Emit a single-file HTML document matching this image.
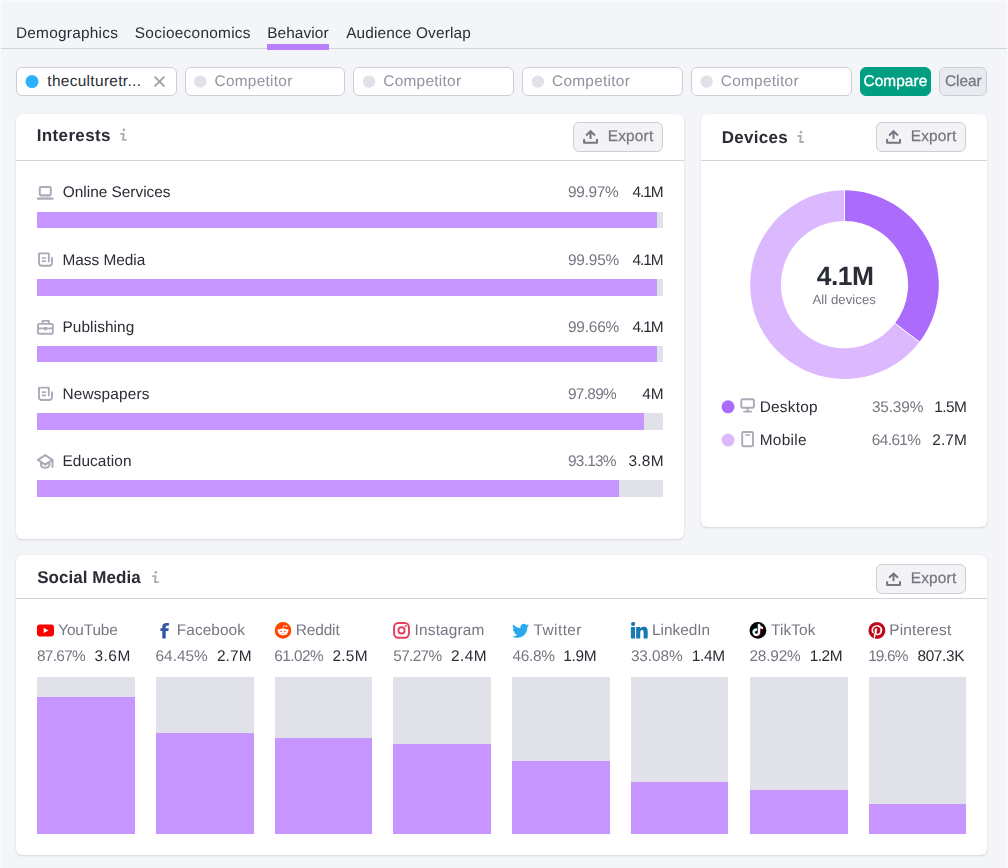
<!DOCTYPE html>
<html lang="en">
<head>
<meta charset="utf-8">
<title>Audience Behavior</title>
<meta name="viewport" content="width=1008">
<style>
*{box-sizing:border-box;margin:0;padding:0}
html,body{width:1008px;height:868px;overflow:hidden;background:#f4f5f9}
body{position:relative;font-family:"Liberation Sans",Arial,sans-serif;font-size:15.4px;line-height:20px;color:#2b2d36;
 box-shadow:inset 1px 1px 0 #f9fafc,inset -1px 0 0 #fbfbfc}
nav,form,section{position:absolute;left:0;top:0;width:1008px;height:868px}
nav,section{will-change:transform}
div,svg.i,.t{position:absolute}
.t{white-space:nowrap;text-rendering:geometricPrecision;line-height:20px;font-weight:400;text-decoration:none;font-kerning:normal}
h2.t{font-weight:700}
.card{background:#fff;border-radius:6px;box-shadow:0 0 1px rgba(25,27,35,.16),0 1px 2px rgba(25,27,35,.12)}
.inp{background:#fff;border:1px solid #cbced6;border-radius:6px}
.btn{background:rgba(138,142,155,.1);border:1px solid #cbced6;border-radius:6px}
.btn.primary{background:#009f81;border-color:#009f81}
.g{left:0;top:0;width:0;height:0}
.bar,.col{background:#e0e1e9}
.bar i{position:absolute;left:0;top:0;bottom:0;background:#c695ff}
.col i{position:absolute;left:0;right:0;bottom:0;background:#c695ff}
</style>
</head>
<body>
<nav>
<a class="t" style="left:15.98px;top:24px;font-size:15.4px;letter-spacing:0.24px;color:#2b2d36;">Demographics</a>
<a class="t" style="left:134.83px;top:24px;font-size:15.4px;letter-spacing:0.28px;color:#2b2d36;">Socioeconomics</a>
<a class="t" style="left:267.18px;top:24px;font-size:15.4px;letter-spacing:0.09px;color:#2b2d36;">Behavior</a>
<a class="t" style="left:346.20px;top:24px;font-size:15.4px;letter-spacing:0.15px;color:#2b2d36;">Audience Overlap</a>
<div style="left:1px;top:48px;width:1006px;height:1px;background:#d1d4db"></div>
<div style="left:267px;top:44px;width:62px;height:6px;background:#b880ff"></div>
</nav>
<form>
<div class="g field">
<div class="inp" style="left:16px;top:67px;width:161px;height:29px;"></div>
<svg class="i" style="left:24px;top:74px" width="18" height="18"><circle cx="8.00" cy="7.60" r="6.5" fill="#2bb3ff"/></svg>
<span class="t" style="left:47.27px;top:72px;font-size:15.4px;letter-spacing:0.34px;color:#2b2d36;">theculturetr...</span>
<svg class="i" style="left:152px;top:74px" width="16" height="16"><g transform="translate(0.500 0.500)"><path d="M2.6 2.6 L11.4 11.4 M11.4 2.6 L2.6 11.4" stroke="#9fa2ae" stroke-width="1.9" stroke-linecap="round"/></g></svg>
</div>
<div class="g field">
<div class="inp" style="left:185px;top:67px;width:160px;height:29px;"></div>
<svg class="i" style="left:193px;top:74px" width="18" height="18"><circle cx="7.35" cy="7.60" r="6.2" fill="#e0e1e9"/></svg>
<span class="t" style="left:214.50px;top:72px;font-size:15.4px;letter-spacing:0.28px;color:#9093a0;">Competitor</span>
</div>
<div class="g field">
<div class="inp" style="left:353px;top:67px;width:161px;height:29px;"></div>
<svg class="i" style="left:361px;top:74px" width="18" height="18"><circle cx="8.10" cy="7.60" r="6.2" fill="#e0e1e9"/></svg>
<span class="t" style="left:383.25px;top:72px;font-size:15.4px;letter-spacing:0.28px;color:#9093a0;">Competitor</span>
</div>
<div class="g field">
<div class="inp" style="left:522px;top:67px;width:161px;height:29px;"></div>
<svg class="i" style="left:530px;top:74px" width="18" height="18"><circle cx="7.85" cy="7.60" r="6.2" fill="#e0e1e9"/></svg>
<span class="t" style="left:552.00px;top:72px;font-size:15.4px;letter-spacing:0.28px;color:#9093a0;">Competitor</span>
</div>
<div class="g field">
<div class="inp" style="left:691px;top:67px;width:161px;height:29px;"></div>
<svg class="i" style="left:699px;top:74px" width="18" height="18"><circle cx="7.60" cy="7.60" r="6.2" fill="#e0e1e9"/></svg>
<span class="t" style="left:720.75px;top:72px;font-size:15.4px;letter-spacing:0.28px;color:#9093a0;">Competitor</span>
</div>
<div class="g"><div class="btn primary" style="left:860px;top:67px;width:71px;height:29px;"></div><span class="t" style="left:863.44px;top:72px;font-size:15.4px;letter-spacing:0.08px;color:#fff;-webkit-text-stroke:0.35px #fff;">Compare</span></div>
<div class="g"><div class="btn" style="left:939px;top:67px;width:48px;height:29px;"></div><span class="t" style="left:944.91px;top:72px;font-size:15.4px;letter-spacing:-0.00px;color:#757782;-webkit-text-stroke:0.25px #757782;">Clear</span></div>
</form>
<section>
<div class="card" style="left:16px;top:114px;width:668px;height:425px;"></div>
<h2 class="t" style="left:36.74px;top:126px;font-size:17px;letter-spacing:0.36px;color:#2b2d36;font-weight:700;">Interests</h2>
<svg class="i" style="left:118px;top:127px" width="12" height="18"><g transform="translate(0.400 0.400)"><circle cx="5.4" cy="2.5" r="1.3" fill="#a9abb6"/><path d="M2.6 6.4 H5.3 L4.5 12.4 H7.6" fill="none" stroke="#a9abb6" stroke-width="1.8" stroke-linejoin="round" stroke-linecap="round"/></g></svg>
<div class="g"><div class="btn" style="left:573px;top:122px;width:90px;height:30px;"></div><svg class="i" style="left:582px;top:129px" width="18" height="18"><g transform="translate(0.800 0.200)"><path d="M7.75 2 V9.8 M3.3 6.3 L7.75 2.05 L12.2 6.3" fill="none" stroke="#757782" stroke-width="2" stroke-linejoin="miter"/><path d="M1.3 9.8 V13.6 H14.2 V9.8" fill="none" stroke="#757782" stroke-width="2" stroke-linejoin="round"/></g></svg><span class="t" style="left:607.72px;top:127px;font-size:15.4px;letter-spacing:0.20px;color:#757782;-webkit-text-stroke:0.25px #757782;">Export</span></div>
<div style="left:16px;top:160px;width:668px;height:1px;background:#d1d4db"></div>
<div class="g row">
<svg class="i" style="left:36px;top:185px" width="20" height="18"><g transform="translate(0.800 0.100)"><rect x="3" y="1.8" width="11" height="8.4" rx="1.2" fill="none" stroke="#a9abb6" stroke-width="2"/><rect x="0.2" y="12.3" width="16.6" height="2.3" rx="0.6" fill="#a9abb6"/><rect x="3" y="11" width="11" height="1.4" fill="#a9abb6" opacity=".4"/></g></svg>
<span class="t" style="left:62.79px;top:183px;font-size:15.4px;letter-spacing:-0.00px;color:#2b2d36;">Online Services</span>
<span class="t" style="left:568.00px;top:183px;font-size:15.4px;letter-spacing:-0.32px;color:#757782;">99.97%</span>
<span class="t" style="left:632.45px;top:183px;font-size:15.4px;letter-spacing:-1.06px;color:#2b2d36;">4.1M</span>
<div class="bar" style="left:37px;top:212px;width:626px;height:16px;"><i style="width:620px"></i></div>
</div>
<div class="g row">
<svg class="i" style="left:36px;top:251px" width="20" height="20"><g transform="translate(0.800 0.200)"><path d="M12 10.2 V2.6 a0.4 0.4 0 0 0 -0.4 -0.4 H2.6 a0.4 0.4 0 0 0 -0.4 0.4 V12 a2.6 2.6 0 0 0 2.6 2.6 H12.6 a2.6 2.6 0 0 0 2.6 -2.6 V6.8" fill="none" stroke="#a9abb6" stroke-width="1.9" stroke-linecap="round" stroke-linejoin="round"/><path d="M5.7 6.8 H8.5 M5.7 10 H8.5" fill="none" stroke="#a9abb6" stroke-width="1.7" stroke-linecap="round"/></g></svg>
<span class="t" style="left:62.48px;top:251px;font-size:15.4px;letter-spacing:-0.02px;color:#2b2d36;">Mass Media</span>
<span class="t" style="left:568.00px;top:251px;font-size:15.4px;letter-spacing:-0.20px;color:#757782;">99.95%</span>
<span class="t" style="left:632.45px;top:251px;font-size:15.4px;letter-spacing:-1.06px;color:#2b2d36;">4.1M</span>
<div class="bar" style="left:37px;top:279px;width:626px;height:17px;"><i style="width:620px"></i></div>
</div>
<div class="g row">
<svg class="i" style="left:36px;top:318px" width="20" height="20"><g transform="translate(0.900 0.900)"><rect x="1.1" y="5" width="14.8" height="9.8" rx="1" fill="none" stroke="#a9abb6" stroke-width="1.85"/><path d="M5.6 4.6 V2 H12 V4.6" fill="none" stroke="#a9abb6" stroke-width="1.85" stroke-linejoin="round"/><path d="M1.5 9.5 H15.6" stroke="#a9abb6" stroke-width="1.7"/><circle cx="8.6" cy="9.7" r="1.9" fill="#a9abb6"/></g></svg>
<span class="t" style="left:62.48px;top:318px;font-size:15.4px;letter-spacing:0.09px;color:#2b2d36;">Publishing</span>
<span class="t" style="left:568.00px;top:318px;font-size:15.4px;letter-spacing:-0.20px;color:#757782;">99.66%</span>
<span class="t" style="left:632.45px;top:318px;font-size:15.4px;letter-spacing:-1.06px;color:#2b2d36;">4.1M</span>
<div class="bar" style="left:37px;top:346px;width:626px;height:16px;"><i style="width:620px"></i></div>
</div>
<div class="g row">
<svg class="i" style="left:36px;top:385px" width="20" height="20"><g transform="translate(0.800 0.400)"><path d="M12 10.2 V2.6 a0.4 0.4 0 0 0 -0.4 -0.4 H2.6 a0.4 0.4 0 0 0 -0.4 0.4 V12 a2.6 2.6 0 0 0 2.6 2.6 H12.6 a2.6 2.6 0 0 0 2.6 -2.6 V6.8" fill="none" stroke="#a9abb6" stroke-width="1.9" stroke-linecap="round" stroke-linejoin="round"/><path d="M5.7 6.8 H8.5 M5.7 10 H8.5" fill="none" stroke="#a9abb6" stroke-width="1.7" stroke-linecap="round"/></g></svg>
<span class="t" style="left:62.48px;top:385px;font-size:15.4px;letter-spacing:0.15px;color:#2b2d36;">Newspapers</span>
<span class="t" style="left:568.00px;top:385px;font-size:15.4px;letter-spacing:-0.70px;color:#757782;">97.89%</span>
<span class="t" style="left:642.25px;top:385px;font-size:15.4px;letter-spacing:0.01px;color:#2b2d36;">4M</span>
<div class="bar" style="left:37px;top:413px;width:626px;height:17px;"><i style="width:607px"></i></div>
</div>
<div class="g row">
<svg class="i" style="left:36px;top:453px" width="20" height="20"><g transform="translate(0.600 0.100)"><path d="M1.4 6.8 L8.6 2 L15.8 6.8 L8.6 11.6 Z" fill="none" stroke="#a9abb6" stroke-width="2" stroke-linejoin="round"/><path d="M4.4 9.4 V12.4 C5.4 15.4 11.8 15.4 12.8 12.4 V9.4" fill="none" stroke="#a9abb6" stroke-width="2" stroke-linejoin="round"/><path d="M15.9 7 V14" fill="none" stroke="#a9abb6" stroke-width="2" stroke-linecap="round"/></g></svg>
<span class="t" style="left:62.48px;top:452px;font-size:15.4px;letter-spacing:0.07px;color:#2b2d36;">Education</span>
<span class="t" style="left:568.00px;top:452px;font-size:15.4px;letter-spacing:-0.74px;color:#757782;">93.13%</span>
<span class="t" style="left:628.49px;top:452px;font-size:15.4px;letter-spacing:0.25px;color:#2b2d36;">3.8M</span>
<div class="bar" style="left:37px;top:480px;width:626px;height:17px;"><i style="width:582px"></i></div>
</div>
</section>
<section>
<div class="card" style="left:701px;top:114px;width:286px;height:412.6px;"></div>
<h2 class="t" style="left:721.74px;top:128px;font-size:17px;letter-spacing:0.27px;color:#2b2d36;font-weight:700;">Devices</h2>
<svg class="i" style="left:795px;top:129px" width="12" height="18"><g transform="translate(0.600 0.600)"><circle cx="5.4" cy="2.5" r="1.3" fill="#a9abb6"/><path d="M2.6 6.4 H5.3 L4.5 12.4 H7.6" fill="none" stroke="#a9abb6" stroke-width="1.8" stroke-linejoin="round" stroke-linecap="round"/></g></svg>
<div class="g"><div class="btn" style="left:876px;top:122px;width:90px;height:30px;"></div><svg class="i" style="left:885px;top:129px" width="18" height="18"><g transform="translate(0.800 0.200)"><path d="M7.75 2 V9.8 M3.3 6.3 L7.75 2.05 L12.2 6.3" fill="none" stroke="#757782" stroke-width="2" stroke-linejoin="miter"/><path d="M1.3 9.8 V13.6 H14.2 V9.8" fill="none" stroke="#757782" stroke-width="2" stroke-linejoin="round"/></g></svg><span class="t" style="left:910.72px;top:127px;font-size:15.4px;letter-spacing:0.20px;color:#757782;-webkit-text-stroke:0.25px #757782;">Export</span></div>
<div style="left:701px;top:160px;width:286px;height:1px;background:#d1d4db"></div>
<svg class="i" style="left:0;top:0" width="1008" height="868" viewBox="0 0 1008 868"><path d="M844.50 190.35 A94.3 94.3 0 0 1 919.41 341.93 L895.02 323.28 A63.6 63.6 0 0 0 844.50 221.05 Z" fill="#ab6cfe"/><path d="M919.41 341.93 A94.3 94.3 0 1 1 844.50 190.35 L844.50 221.05 A63.6 63.6 0 1 0 895.02 323.28 Z" fill="#dcb8ff"/><path d="M844.50 222.05 L844.50 189.35" stroke="#fff" stroke-width="1"/><path d="M894.23 322.68 L920.20 342.54" stroke="#fff" stroke-width="1"/></svg>
<span class="t" style="left:816.78px;top:266px;font-size:26.4px;letter-spacing:-0.52px;color:#2b2d36;font-weight:700;">4.1M</span>
<span class="t" style="left:812.40px;top:290px;font-size:13.2px;letter-spacing:0.05px;color:#757782;">All devices</span>
<div class="g legend">
<svg class="i" style="left:720px;top:399px" width="18" height="18"><circle cx="8.05" cy="7.80" r="6.5" fill="#ab6cfe"/></svg>
<svg class="i" style="left:740px;top:398px" width="18" height="17"><g transform="translate(0.100 0.000)"><rect x="1.2" y="1.2" width="12.6" height="8.6" rx="1.2" fill="none" stroke="#a9abb6" stroke-width="1.9"/><path d="M7.5 10 V13.2" stroke="#a9abb6" stroke-width="2"/><path d="M4 13.6 H11" stroke="#a9abb6" stroke-width="1.9" stroke-linecap="round"/></g></svg>
<span class="t" style="left:759.78px;top:398px;font-size:15.4px;letter-spacing:0.21px;color:#2b2d36;">Desktop</span>
<span class="t" style="left:871.89px;top:398px;font-size:15.4px;letter-spacing:-0.14px;color:#757782;">35.39%</span>
<span class="t" style="left:934.13px;top:398px;font-size:15.4px;letter-spacing:-0.53px;color:#2b2d36;">1.5M</span>
</div>
<div class="g legend">
<svg class="i" style="left:720px;top:432px" width="18" height="18"><circle cx="8.05" cy="8.10" r="6.5" fill="#dcb8ff"/></svg>
<svg class="i" style="left:741px;top:430px" width="18" height="20"><g transform="translate(0.100 0.900)"><rect x="1.1" y="1.1" width="10.8" height="14.2" rx="1.2" fill="none" stroke="#a9abb6" stroke-width="1.9"/><path d="M4.6 4 H8.4" stroke="#a9abb6" stroke-width="1.5" stroke-linecap="round"/></g></svg>
<span class="t" style="left:759.78px;top:431px;font-size:15.4px;letter-spacing:0.27px;color:#2b2d36;">Mobile</span>
<span class="t" style="left:871.84px;top:431px;font-size:15.4px;letter-spacing:-0.61px;color:#757782;">64.61%</span>
<span class="t" style="left:932.30px;top:431px;font-size:15.4px;letter-spacing:0.09px;color:#2b2d36;">2.7M</span>
</div>
</section>
<section>
<div class="card" style="left:16px;top:555px;width:971px;height:300px;"></div>
<h2 class="t" style="left:37.13px;top:568px;font-size:17px;letter-spacing:0.06px;color:#2b2d36;font-weight:700;">Social Media</h2>
<svg class="i" style="left:150px;top:569px" width="12" height="18"><g transform="translate(0.400 0.800)"><circle cx="5.4" cy="2.5" r="1.3" fill="#a9abb6"/><path d="M2.6 6.4 H5.3 L4.5 12.4 H7.6" fill="none" stroke="#a9abb6" stroke-width="1.8" stroke-linejoin="round" stroke-linecap="round"/></g></svg>
<div class="g"><div class="btn" style="left:876px;top:564px;width:90px;height:30px;"></div><svg class="i" style="left:885px;top:571px" width="18" height="18"><g transform="translate(0.800 0.500)"><path d="M7.75 2 V9.8 M3.3 6.3 L7.75 2.05 L12.2 6.3" fill="none" stroke="#757782" stroke-width="2" stroke-linejoin="miter"/><path d="M1.3 9.8 V13.6 H14.2 V9.8" fill="none" stroke="#757782" stroke-width="2" stroke-linejoin="round"/></g></svg><span class="t" style="left:910.72px;top:569px;font-size:15.4px;letter-spacing:0.20px;color:#757782;-webkit-text-stroke:0.25px #757782;">Export</span></div>
<div style="left:16px;top:598px;width:971px;height:1px;background:#d1d4db"></div>
<div class="g network">
<svg class="i" style="left:37px;top:624px" width="18" height="14"><g transform="translate(0.000 0.400)"><rect x="0" y="0" width="17" height="12" rx="2.8" fill="#ff0000"/><path d="M6.7 3.3 L11.4 6 L6.7 8.7 Z" fill="#fff"/></g></svg>
<span class="t" style="left:58.31px;top:621px;font-size:15.4px;letter-spacing:-0.17px;color:#757782;">YouTube</span>
<span class="t" style="left:36.94px;top:647px;font-size:15.4px;letter-spacing:-0.69px;color:#757782;">87.67%</span>
<span class="t" style="left:94.39px;top:647px;font-size:15.4px;letter-spacing:0.55px;color:#2b2d36;">3.6M</span>
<div class="col" style="left:37px;top:677px;width:98px;height:157px;"><i style="height:137px"></i></div>
</div>
<div class="g network">
<svg class="i" style="left:160px;top:622px" width="11" height="19"><g transform="translate(0.000 0.500)"><path d="M2.3 16.1 V8.6 H0.4 V5.8 H2.3 V4.2 C2.3 1.6 3.9 0.4 6.4 0.4 C7.4 0.4 8.3 0.5 8.9 0.6 V3.2 H7.4 C6.2 3.2 5.7 3.7 5.7 4.7 V5.8 H8.8 L8.4 8.6 H5.7 V16.1 Z" fill="#3257a6"/></g></svg>
<span class="t" style="left:176.78px;top:621px;font-size:15.4px;letter-spacing:0.08px;color:#757782;">Facebook</span>
<span class="t" style="left:155.54px;top:647px;font-size:15.4px;letter-spacing:-0.01px;color:#757782;">64.45%</span>
<span class="t" style="left:216.90px;top:647px;font-size:15.4px;letter-spacing:0.12px;color:#2b2d36;">2.7M</span>
<div class="col" style="left:156px;top:677px;width:98px;height:157px;"><i style="height:101px"></i></div>
</div>
<div class="g network">
<svg class="i" style="left:274px;top:622px" width="19" height="18"><g transform="translate(0.700 0.100) scale(0.69167 0.69167)"><circle cx="12" cy="12" r="11.5" fill="#fff"/><path d="M12 0A12 12 0 0 0 0 12a12 12 0 0 0 12 12 12 12 0 0 0 12-12A12 12 0 0 0 12 0zm5.01 4.744c.688 0 1.25.561 1.25 1.249a1.25 1.25 0 0 1-2.498.056l-2.597-.547-.8 3.747c1.824.07 3.48.632 4.674 1.488.308-.309.73-.491 1.207-.491.968 0 1.754.786 1.754 1.754 0 .716-.435 1.333-1.01 1.614a3.111 3.111 0 0 1 .042.52c0 2.694-3.13 4.87-7.004 4.87-3.874 0-7.004-2.176-7.004-4.87 0-.183.015-.366.043-.534A1.748 1.748 0 0 1 4.028 12c0-.968.786-1.754 1.754-1.754.463 0 .898.196 1.207.49 1.207-.883 2.878-1.43 4.744-1.487l.885-4.182a.342.342 0 0 1 .14-.197.35.35 0 0 1 .238-.042l2.906.617a1.214 1.214 0 0 1 1.108-.701zM9.25 12C8.561 12 8 12.562 8 13.25c0 .687.561 1.248 1.25 1.248.687 0 1.248-.561 1.248-1.249 0-.688-.561-1.249-1.249-1.249zm5.5 0c-.687 0-1.248.561-1.248 1.25 0 .687.561 1.248 1.249 1.248.688 0 1.249-.561 1.249-1.249 0-.687-.562-1.249-1.25-1.249zm-5.466 3.99a.327.327 0 0 0-.231.094.33.33 0 0 0 0 .463c.842.842 2.484.913 2.961.913.477 0 2.105-.056 2.961-.913a.361.361 0 0 0 .029-.463.33.33 0 0 0-.464 0c-.547.533-1.684.73-2.512.73-.828 0-1.979-.196-2.512-.73a.326.326 0 0 0-.232-.095z" fill="#ff4500"/></g></svg>
<span class="t" style="left:295.68px;top:621px;font-size:15.4px;letter-spacing:-0.09px;color:#757782;">Reddit</span>
<span class="t" style="left:274.34px;top:647px;font-size:15.4px;letter-spacing:-0.57px;color:#757782;">61.02%</span>
<span class="t" style="left:332.40px;top:647px;font-size:15.4px;letter-spacing:0.29px;color:#2b2d36;">2.5M</span>
<div class="col" style="left:275px;top:677px;width:97px;height:157px;"><i style="height:96px"></i></div>
</div>
<div class="g network">
<svg class="i" style="left:393px;top:621px" width="18" height="19"><g transform="translate(0.000 0.900)"><rect x="1.1" y="1.1" width="14.8" height="14.8" rx="4.2" fill="none" stroke="#e4405f" stroke-width="2"/><circle cx="8.5" cy="8.5" r="3.1" fill="none" stroke="#e4405f" stroke-width="1.9"/><circle cx="12.8" cy="4.1" r="1.05" fill="#e4405f"/></g></svg>
<span class="t" style="left:414.57px;top:621px;font-size:15.4px;letter-spacing:0.18px;color:#757782;">Instagram</span>
<span class="t" style="left:393.28px;top:647px;font-size:15.4px;letter-spacing:-0.65px;color:#757782;">57.27%</span>
<span class="t" style="left:450.90px;top:647px;font-size:15.4px;letter-spacing:0.45px;color:#2b2d36;">2.4M</span>
<div class="col" style="left:393px;top:677px;width:98px;height:157px;"><i style="height:90px"></i></div>
</div>
<div class="g network">
<svg class="i" style="left:512px;top:623px" width="19" height="16"><g transform="translate(0.100 -0.771) scale(0.70833 0.71429)"><path d="M23.953 4.57a10 10 0 01-2.825.775 4.958 4.958 0 002.163-2.723c-.951.555-2.005.959-3.127 1.184a4.92 4.92 0 00-8.384 4.482C7.69 8.095 4.067 6.13 1.64 3.162a4.822 4.822 0 00-.666 2.475c0 1.71.87 3.213 2.188 4.096a4.904 4.904 0 01-2.228-.616v.06a4.923 4.923 0 003.946 4.827 4.996 4.996 0 01-2.212.085 4.936 4.936 0 004.604 3.417 9.867 9.867 0 01-6.102 2.105c-.39 0-.779-.023-1.17-.067a13.995 13.995 0 007.557 2.209c9.053 0 13.998-7.496 13.998-13.985 0-.21 0-.42-.015-.63A9.935 9.935 0 0024 4.59z" fill="#29a9ea"/></g></svg>
<span class="t" style="left:533.48px;top:621px;font-size:15.4px;letter-spacing:0.45px;color:#757782;">Twitter</span>
<span class="t" style="left:512.45px;top:647px;font-size:15.4px;letter-spacing:-0.31px;color:#757782;">46.8%</span>
<span class="t" style="left:563.13px;top:647px;font-size:15.4px;letter-spacing:-0.29px;color:#2b2d36;">1.9M</span>
<div class="col" style="left:512px;top:677px;width:98px;height:157px;"><i style="height:73px"></i></div>
</div>
<div class="g network">
<svg class="i" style="left:630px;top:622px" width="19" height="18"><g transform="translate(0.900 0.000)"><circle cx="2.2" cy="2" r="2.1" fill="#1878b4"/><path d="M0 5.1 H4.15 V16.6 H1.2 a1.2 1.2 0 0 1 -1.2 -1.2 Z" fill="#1878b4"/><path d="M5.25 5.1 H9.2 V6.6 C9.9 5.5 11.2 4.75 12.8 4.75 C15.8 4.75 16.8 6.7 16.8 9.6 V15.4 a1.2 1.2 0 0 1 -1.2 1.2 H12.7 V10.5 C12.7 9.1 12.4 8.1 11.1 8.1 C9.8 8.1 9.35 9.1 9.35 10.5 V16.6 H5.25 Z" fill="#1878b4"/></g></svg>
<span class="t" style="left:651.98px;top:621px;font-size:15.4px;letter-spacing:-0.00px;color:#757782;">LinkedIn</span>
<span class="t" style="left:630.89px;top:647px;font-size:15.4px;letter-spacing:-0.08px;color:#757782;">33.08%</span>
<span class="t" style="left:691.63px;top:647px;font-size:15.4px;letter-spacing:-0.29px;color:#2b2d36;">1.4M</span>
<div class="col" style="left:631px;top:677px;width:97px;height:157px;"><i style="height:52px"></i></div>
</div>
<div class="g network">
<svg class="i" style="left:749px;top:622px" width="19" height="18"><g transform="translate(0.500 0.000) scale(0.70000 0.70000)"><circle cx="12" cy="12" r="12" fill="#000"/><path transform="translate(2.9,2.6) scale(0.7)" d="M12.525.02c1.31-.02 2.61-.01 3.91-.02.08 1.53.63 3.09 1.75 4.17 1.12 1.11 2.7 1.62 4.24 1.79v4.03c-1.44-.05-2.89-.35-4.2-.97-.57-.26-1.1-.59-1.62-.93-.01 2.92.01 5.84-.02 8.75-.08 1.4-.54 2.79-1.35 3.94-1.31 1.92-3.58 3.17-5.91 3.21-1.43.08-2.86-.31-4.08-1.03-2.02-1.19-3.44-3.37-3.65-5.71-.02-.5-.03-1-.01-1.49.18-1.9 1.12-3.72 2.58-4.96 1.66-1.44 3.98-2.13 6.15-1.72.02 1.48-.04 2.96-.04 4.44-.99-.32-2.15-.23-3.02.37-.63.41-1.11 1.04-1.36 1.75-.21.51-.15 1.07-.14 1.61.24 1.64 1.82 3.02 3.5 2.87 1.12-.01 2.19-.66 2.77-1.61.19-.33.4-.67.41-1.06.1-1.79.06-3.57.07-5.36.01-4.03-.01-8.05.02-12.07z" fill="#25f4ee"/><path transform="translate(4.1,3.6) scale(0.7)" d="M12.525.02c1.31-.02 2.61-.01 3.91-.02.08 1.53.63 3.09 1.75 4.17 1.12 1.11 2.7 1.62 4.24 1.79v4.03c-1.44-.05-2.89-.35-4.2-.97-.57-.26-1.1-.59-1.62-.93-.01 2.92.01 5.84-.02 8.75-.08 1.4-.54 2.79-1.35 3.94-1.31 1.92-3.58 3.17-5.91 3.21-1.43.08-2.86-.31-4.08-1.03-2.02-1.19-3.44-3.37-3.65-5.71-.02-.5-.03-1-.01-1.49.18-1.9 1.12-3.72 2.58-4.96 1.66-1.44 3.98-2.13 6.15-1.72.02 1.48-.04 2.96-.04 4.44-.99-.32-2.15-.23-3.02.37-.63.41-1.11 1.04-1.36 1.75-.21.51-.15 1.07-.14 1.61.24 1.64 1.82 3.02 3.5 2.87 1.12-.01 2.19-.66 2.77-1.61.19-.33.4-.67.41-1.06.1-1.79.06-3.57.07-5.36.01-4.03-.01-8.05.02-12.07z" fill="#fe2c55"/><path transform="translate(3.5,3.1) scale(0.7)" d="M12.525.02c1.31-.02 2.61-.01 3.91-.02.08 1.53.63 3.09 1.75 4.17 1.12 1.11 2.7 1.62 4.24 1.79v4.03c-1.44-.05-2.89-.35-4.2-.97-.57-.26-1.1-.59-1.62-.93-.01 2.92.01 5.84-.02 8.75-.08 1.4-.54 2.79-1.35 3.94-1.31 1.92-3.58 3.17-5.91 3.21-1.43.08-2.86-.31-4.08-1.03-2.02-1.19-3.44-3.37-3.65-5.71-.02-.5-.03-1-.01-1.49.18-1.9 1.12-3.72 2.58-4.96 1.66-1.44 3.98-2.13 6.15-1.72.02 1.48-.04 2.96-.04 4.44-.99-.32-2.15-.23-3.02.37-.63.41-1.11 1.04-1.36 1.75-.21.51-.15 1.07-.14 1.61.24 1.64 1.82 3.02 3.5 2.87 1.12-.01 2.19-.66 2.77-1.61.19-.33.4-.67.41-1.06.1-1.79.06-3.57.07-5.36.01-4.03-.01-8.05.02-12.07z" fill="#fff"/></g></svg>
<span class="t" style="left:771.08px;top:621px;font-size:15.4px;letter-spacing:0.09px;color:#757782;">TikTok</span>
<span class="t" style="left:749.40px;top:647px;font-size:15.4px;letter-spacing:-0.18px;color:#757782;">28.92%</span>
<span class="t" style="left:809.63px;top:647px;font-size:15.4px;letter-spacing:-0.46px;color:#2b2d36;">1.2M</span>
<div class="col" style="left:750px;top:677px;width:98px;height:157px;"><i style="height:44px"></i></div>
</div>
<div class="g network">
<svg class="i" style="left:868px;top:622px" width="19" height="18"><g transform="translate(0.500 0.000) scale(0.70000 0.70000)"><circle cx="12" cy="12" r="11.5" fill="#fff"/><path d="M12.017 0C5.396 0 .029 5.367.029 11.987c0 5.079 3.158 9.417 7.618 11.162-.105-.949-.199-2.403.041-3.439.219-.937 1.406-5.957 1.406-5.957s-.359-.72-.359-1.781c0-1.663.967-2.911 2.168-2.911 1.024 0 1.518.769 1.518 1.688 0 1.029-.653 2.567-.992 3.992-.285 1.193.6 2.165 1.775 2.165 2.128 0 3.768-2.245 3.768-5.487 0-2.861-2.063-4.869-5.008-4.869-3.41 0-5.409 2.562-5.409 5.199 0 1.033.394 2.143.889 2.741.099.12.112.225.085.345-.09.375-.293 1.199-.334 1.363-.053.225-.172.271-.401.165-1.495-.69-2.433-2.878-2.433-4.646 0-3.776 2.748-7.252 7.92-7.252 4.158 0 7.392 2.967 7.392 6.923 0 4.135-2.607 7.462-6.233 7.462-1.214 0-2.354-.629-2.758-1.379l-.749 2.848c-.269 1.045-1.004 2.352-1.498 3.146 1.123.345 2.306.535 3.55.535 6.607 0 11.985-5.365 11.985-11.987C23.97 5.39 18.592.026 11.985.026L12.017 0z" fill="#bd081c"/></g></svg>
<span class="t" style="left:889.28px;top:621px;font-size:15.4px;letter-spacing:0.15px;color:#757782;">Pinterest</span>
<span class="t" style="left:868.13px;top:647px;font-size:15.4px;letter-spacing:-0.85px;color:#757782;">19.6%</span>
<span class="t" style="left:917.44px;top:647px;font-size:15.4px;letter-spacing:-0.36px;color:#2b2d36;">807.3K</span>
<div class="col" style="left:869px;top:677px;width:97px;height:157px;"><i style="height:30px"></i></div>
</div>
</section>
</body>
</html>
